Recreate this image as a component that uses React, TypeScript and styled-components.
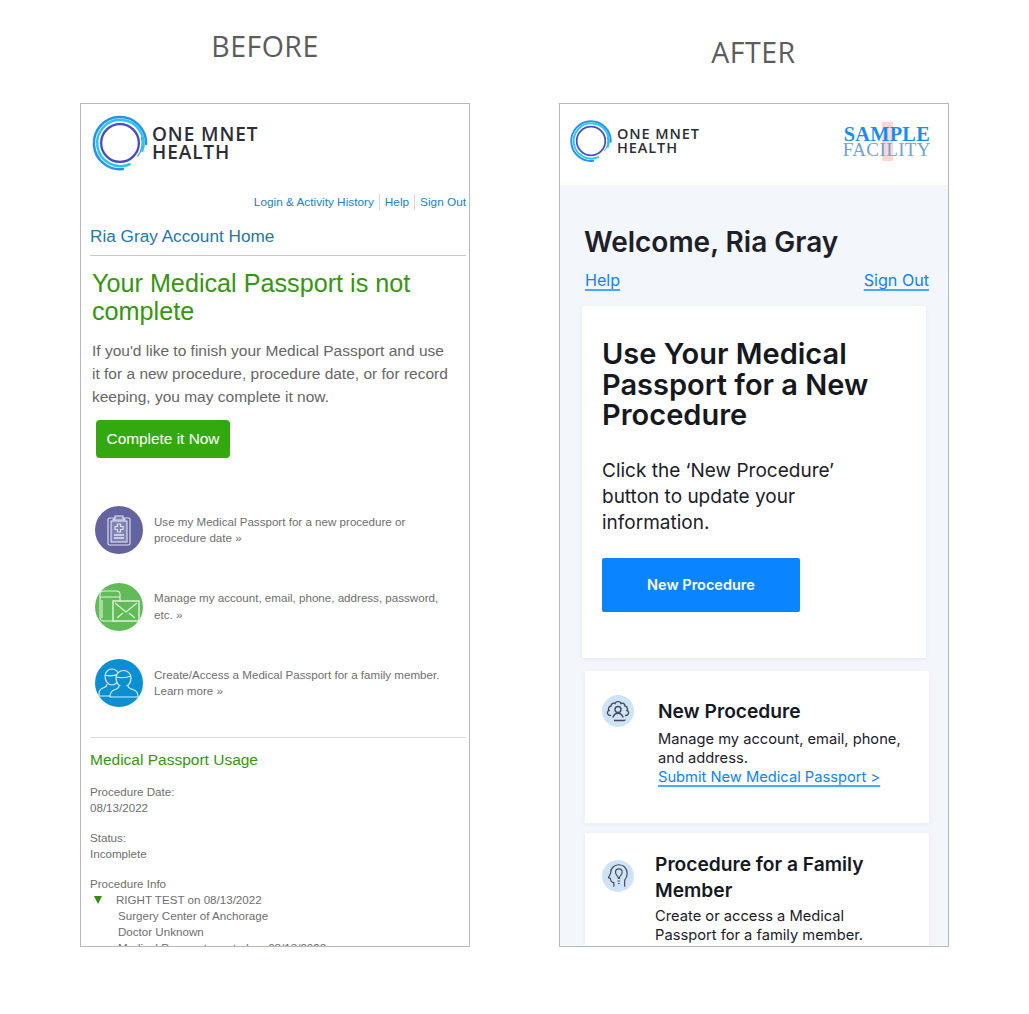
import styled, { createGlobalStyle } from "styled-components";

const GlobalStyle = createGlobalStyle`
  * { box-sizing: border-box; }
  html, body { margin: 0; padding: 0; background: #fff; }
`;

const Page = styled.div`
  display: flex;
  width: 1029px;
  height: 1014px;
  padding-left: 80px;
  gap: 89px;
  overflow: hidden;
`;

const Column = styled.div`
  width: 390px;
  display: flex;
  flex-direction: column;
`;

const Caption = styled.div<{ $top: number; $shift: number }>`
  height: 103px;
  padding-top: ${(p) => p.$top}px;
  margin-left: ${(p) => p.$shift}px;
  text-align: center;
  font-family: "Open Sans", "Liberation Sans", sans-serif;
  font-size: 28.5px;
  line-height: 36px;
  letter-spacing: 0.5px;
  color: #5c5c5c;
`;

const Frame = styled.div`
  height: 844px;
  border: 1px solid #b8b8b8;
  overflow: hidden;
  background: #fff;
`;

/* old site */
const Old = styled.div`
  font-family: "Liberation Sans", Arial, sans-serif;
  color: #6a6a6a;
  padding: 9px 3px 0 9px;
`;

const OldLogoRow = styled.div`
  display: flex;
  align-items: center;
  gap: 3px;
  margin-left: 1px;
  height: 60px;
`;

const LogoText = styled.div<{ $size: number; $line: number }>`
  font-family: "Open Sans", "Liberation Sans", sans-serif;
  font-weight: 600;
  font-size: ${(p) => p.$size}px;
  line-height: ${(p) => p.$line}px;
  letter-spacing: 0.9px;
  color: #2b2e36;
`;

const OldLinks = styled.div`
  display: flex;
  justify-content: flex-end;
  margin-top: 21px;
  font-size: 11.8px;
  line-height: 16px;
  color: #1a7fc1;
`;

const OldLink = styled.span`
  padding: 0 5px;
  border-left: 1px solid #d6d6e0;
  &:first-child { border-left: 0; }
  &:last-child { padding-right: 0; }
`;

const OldAccount = styled.div`
  margin-top: 16px;
  padding-bottom: 8px;
  border-bottom: 1px solid #c9c9c9;
  font-size: 17.2px;
  line-height: 21px;
  color: #2277aa;
`;

const OldHeading = styled.h1`
  margin: 13px 0 0 2px;
  font-weight: 400;
  font-size: 25.2px;
  line-height: 28px;
  color: #35950f;
`;

const OldPara = styled.p`
  margin: 14px 0 0 2px;
  font-size: 15.5px;
  line-height: 23px;
  color: #666;
`;

const OldButton = styled.div`
  width: 134px;
  height: 38px;
  margin: 12px 0 0 6px;
  border-radius: 4px;
  background: #34a80f;
  color: #fff;
  font-size: 15.4px;
  line-height: 38px;
  text-align: center;
`;

const OldList = styled.div`
  display: flex;
  flex-direction: column;
  gap: 28.5px;
  margin: 48px 0 0 5px;
`;

const OldRow = styled.div`
  display: flex;
  align-items: center;
  gap: 11px;
  height: 48px;
`;

const OldCircle = styled.div<{ $bg: string }>`
  flex: none;
  width: 48px;
  height: 48px;
  border-radius: 50%;
  background: ${(p) => p.$bg};
  display: flex;
  align-items: center;
  justify-content: center;
`;

const OldRowText = styled.div`
  font-size: 11.6px;
  line-height: 16.5px;
  color: #6e6e6e;
`;

const OldUsage = styled.div`
  margin-top: 30px;
  border-top: 1px solid #dcdcdc;
  padding-top: 12px;
  font-size: 15.5px;
  line-height: 20px;
  color: #35950f;
`;

const OldBlock = styled.div`
  margin-top: 14px;
  font-size: 11.6px;
  line-height: 16px;
  color: #6e6e6e;
`;

const ProcedureRow = styled.div`
  display: flex;
  align-items: center;
  padding-left: 4px;
  gap: 14px;
`;

const Triangle = styled.span`
  width: 0;
  height: 0;
  border-left: 4.5px solid transparent;
  border-right: 4.5px solid transparent;
  border-top: 8px solid #2f8f10;
`;

const Indented = styled.div`
  padding-left: 28px;
`;

/* new site */
const NewHeader = styled.div`
  height: 81px;
  display: flex;
  align-items: flex-start;
  justify-content: space-between;
  padding: 15px 17px 0 9px;
  background: #fff;
`;

const NewLogoRow = styled.div`
  display: flex;
  align-items: center;
  gap: 4px;
`;

const Facility = styled.div`
  position: relative;
  margin-top: 6px;
  font-family: "Liberation Serif", serif;
  text-align: center;
  color: #1a8cf0;
`;

const FacilityMark = styled.span`
  position: absolute;
  left: 39px;
  top: -3px;
  width: 11px;
  height: 39px;
  background: #f8d9d8;
`;

const FacilityTop = styled.div`
  position: relative;
  font-weight: 700;
  font-size: 20.3px;
  line-height: 19px;
  letter-spacing: 0.3px;
`;

const FacilityBottom = styled.div`
  position: relative;
  margin-top: -3px;
  font-size: 19px;
  line-height: 17px;
  letter-spacing: 0.4px;
  color: #6fa3d8;
`;

const NewBody = styled.div`
  height: 762px;
  padding: 39px 19px 0 22px;
  background: #f3f6fb;
  font-family: Inter, "Liberation Sans", sans-serif;
  color: #1d2029;
`;

const Welcome = styled.h1`
  margin: 0 0 0 2px;
  font-weight: 600;
  font-size: 28px;
  line-height: 36px;
`;

const LinkRow = styled.div`
  display: flex;
  justify-content: space-between;
  margin: 9px 0 0 3px;
  font-size: 16.1px;
  line-height: 22px;
`;

const BlueLink = styled.span`
  color: #0a84ff;
  text-decoration: underline;
  text-decoration-color: #4ea6ff;
  text-underline-offset: 3px;
  text-decoration-thickness: 1.5px;
`;

const HeroCard = styled.div`
  width: 344px;
  height: 352px;
  margin-top: 15px;
  padding: 33px 20px 0;
  background: #fff;
  box-shadow: 0 1px 4px rgba(60, 80, 120, 0.08);
`;

const HeroTitle = styled.h2`
  margin: 0;
  font-weight: 600;
  font-size: 29px;
  line-height: 30.5px;
  color: #16181f;
`;

const HeroText = styled.p`
  max-width: 245px;
  margin: 27px 0 0;
  font-size: 19px;
  line-height: 26px;
`;

const HeroButton = styled.div`
  width: 198px;
  height: 54px;
  margin-top: 22px;
  border-radius: 2px;
  background: #0a84ff;
  color: #fff;
  font-weight: 600;
  font-size: 14.5px;
  line-height: 54px;
  text-align: center;
`;

const InfoCard = styled.div<{ $height: number; $gap: number; $top: number; $padTop: number }>`
  width: 344px;
  height: ${(p) => p.$height}px;
  margin: ${(p) => p.$top}px 0 0 3px;
  padding: ${(p) => p.$padTop}px 12px 0 17px;
  display: flex;
  gap: ${(p) => p.$gap}px;
  background: #fff;
  box-shadow: 0 1px 4px rgba(60, 80, 120, 0.08);
`;

const IconDisc = styled.div<{ $offset: number }>`
  flex: none;
  width: 32px;
  height: 32px;
  margin-top: ${(p) => p.$offset}px;
  border-radius: 50%;
  background: #cfe3f7;
  display: flex;
  align-items: center;
  justify-content: center;
`;

const InfoTitle = styled.div`
  font-weight: 600;
  font-size: 19.2px;
  line-height: 26px;
  color: #16181f;
`;

const InfoText = styled.div<{ $top: number }>`
  margin-top: ${(p) => p.$top}px;
  font-size: 14.7px;
  line-height: 19px;
`;

function RingLogo({ size }: { size: number }) {
  return (
    <svg width={size} height={size} viewBox="0 0 60 60" fill="none">
      <path d="M57 31A27 27 0 1 0 33 57" stroke="#2a8ff2" strokeWidth="2.6" strokeLinecap="round" />
      <path d="M53 38A24 24 0 1 0 40 52" stroke="#25c9ef" strokeWidth="2.6" strokeLinecap="round" />
      <path d="M52 24A22.5 22.5 0 0 1 48 44" stroke="#3aa0f0" strokeWidth="1.2" />
      <circle cx="30" cy="30" r="19.5" stroke="#4b4ac6" strokeWidth="2.4" />
    </svg>
  );
}

function ClipboardIcon() {
  return (
    <svg width="26" height="32" viewBox="0 0 26 32" fill="none" stroke="#e4e4f2" strokeWidth="1.1">
      <rect x="2" y="4" width="22" height="27" rx="1.5" />
      <rect x="5" y="7" width="16" height="21" fill="#8384b6" />
      <path d="M9 4V2h8v2l2 2H7z" fill="#8384b6" />
      <path d="M11.500 10h3v2.500H17v3h-2.500V18h-3v-2.500H9v-3h2.500z" />
      <path d="M8 21h10M8 24h10" strokeWidth="1.6" />
    </svg>
  );
}

function DevicesIcon() {
  return (
    <svg width="42" height="34" viewBox="0 0 42 34" fill="none" stroke="#e4f5df" strokeWidth="1.1">
      <rect x="2" y="1" width="20" height="30" rx="3.500" />
      <path d="M2 7h20M4 10v18" />
      <rect x="15" y="11" width="26" height="20" fill="#62bb58" strokeWidth="1.4" />
      <path d="M17 13l11 9 11-9M19 28l6-5M37 28l-6-5" />
    </svg>
  );
}

function PeopleIcon() {
  return (
    <svg width="42" height="34" viewBox="0 0 42 34" fill="none" stroke="#d8eefa" strokeWidth="1.2">
      <path d="M7 10a7 7 0 0 1 14 0c0 5-3 9-7 9s-7-4-7-9zM7 9c3 1 9 1 14-1" />
      <path d="M9 18c0 2-1 3-4 4-3 1-4 3-4 6v2h13" />
      <path d="M18 12a7.500 7.500 0 0 1 15 0c0 5-3 9-7.500 9S18 17 18 12zM18 11c4 1 10 1 15-1" fill="#0a8fd3" />
      <path d="M21 20c0 2-2 3-5 4-3 1-4 3-4 7h28c0-4-1-6-4-7-3-1-6-2-6-4" fill="#0a8fd3" />
    </svg>
  );
}

function GearPersonIcon() {
  return (
    <svg width="24" height="24" viewBox="0 0 24 24" fill="none" stroke="#454a57" strokeWidth="1.4">
      <circle cx="12" cy="10.500" r="3" />
      <path d="M8 21.500h10c1 0 1-.5 1-1M6.800 18.500c1-3 2.700-4.300 5.200-4.300s4.200 1.300 5.200 4.300" />
      <path d="M5 16.500c-2.500 0-4-1.700-3.500-3.500.2-.8.800-1.300 1.500-1.500-1-1.500-.5-4 2-4.500 0-2 2-3.500 4-2.500.8-2.500 5.200-2.500 6 0 2-1 4 .5 4 2.500 2.500.5 3 3 2 4.500.7.200 1.300.7 1.500 1.500.5 1.800-1 3.500-3.500 3.500" />
    </svg>
  );
}

function HeadBulbIcon() {
  return (
    <svg width="20" height="26" viewBox="0 0 24 30" fill="none" stroke="#454a57" strokeWidth="1.4">
      <path d="M7 28v-5c-3-.5-4-1.500-4-5l-2.500-1 2.500-5C3 6 7 1.500 13 1.500S23 6 23 12c0 4-1.500 6.500-3 8v8" />
      <path d="M12.500 18c0-3-3.500-4-3.500-7.500a4 4 0 0 1 8 0c0 3.500-3.500 4.500-3.500 7.500zM11.500 21h3M12 24h2" />
    </svg>
  );
}

export default function App() {
  return (
    <>
      <GlobalStyle />
      <Page>
        <Column>
          <Caption $top={28} $shift={-20}>BEFORE</Caption>
          <Frame>
            <Old>
              <OldLogoRow>
                <RingLogo size={58} />
                <LogoText $size={19} $line={18}>
                  ONE MNET
                  <br />
                  HEALTH
                </LogoText>
              </OldLogoRow>
              <OldLinks>
                <OldLink>Login &amp; Activity History</OldLink>
                <OldLink>Help</OldLink>
                <OldLink>Sign Out</OldLink>
              </OldLinks>
              <OldAccount>Ria Gray Account Home</OldAccount>
              <OldHeading>Your Medical Passport is not complete</OldHeading>
              <OldPara>
                If you'd like to finish your Medical Passport and use
                <br />
                it for a new procedure, procedure date, or for record
                <br />
                keeping, you may complete it now.
              </OldPara>
              <OldButton>Complete it Now</OldButton>
              <OldList>
                <OldRow>
                  <OldCircle $bg="#62639f">
                    <ClipboardIcon />
                  </OldCircle>
                  <OldRowText>
                    Use my Medical Passport for a new procedure or
                    <br />
                    procedure date »
                  </OldRowText>
                </OldRow>
                <OldRow>
                  <OldCircle $bg="#62bb58">
                    <DevicesIcon />
                  </OldCircle>
                  <OldRowText>
                    Manage my account, email, phone, address, password,
                    <br />
                    etc. »
                  </OldRowText>
                </OldRow>
                <OldRow>
                  <OldCircle $bg="#0a8fd3">
                    <PeopleIcon />
                  </OldCircle>
                  <OldRowText>
                    Create/Access a Medical Passport for a family member.
                    <br />
                    Learn more »
                  </OldRowText>
                </OldRow>
              </OldList>
              <OldUsage>Medical Passport Usage</OldUsage>
              <OldBlock>
                Procedure Date:
                <br />
                08/13/2022
              </OldBlock>
              <OldBlock>
                Status:
                <br />
                Incomplete
              </OldBlock>
              <OldBlock>
                Procedure Info
                <ProcedureRow>
                  <Triangle />
                  RIGHT TEST on 08/13/2022
                </ProcedureRow>
                <Indented>
                  Surgery Center of Anchorage
                  <br />
                  Doctor Unknown
                  <br />
                  Medical Passport created on 08/13/2022
                </Indented>
              </OldBlock>
            </Old>
          </Frame>
        </Column>
        <Column>
          <Caption $top={34} $shift={-1}>AFTER</Caption>
          <Frame>
            <NewHeader>
              <NewLogoRow>
                <RingLogo size={44} />
                <LogoText $size={14.5} $line={14}>
                  ONE MNET
                  <br />
                  HEALTH
                </LogoText>
              </NewLogoRow>
              <Facility>
                <FacilityMark />
                <FacilityTop>SAMPLE</FacilityTop>
                <FacilityBottom>FACILITY</FacilityBottom>
              </Facility>
            </NewHeader>
            <NewBody>
              <Welcome>Welcome, Ria Gray</Welcome>
              <LinkRow>
                <BlueLink>Help</BlueLink>
                <BlueLink>Sign Out</BlueLink>
              </LinkRow>
              <HeroCard>
                <HeroTitle>Use Your Medical Passport for a New Procedure</HeroTitle>
                <HeroText>Click the ‘New Procedure’ button to update your information.</HeroText>
                <HeroButton>New Procedure</HeroButton>
              </HeroCard>
              <InfoCard $height={152} $gap={24} $top={13} $padTop={27}>
                <IconDisc $offset={-3}>
                  <GearPersonIcon />
                </IconDisc>
                <div>
                  <InfoTitle>New Procedure</InfoTitle>
                  <InfoText $top={6}>
                    Manage my account, email, phone, and address.
                    <br />
                    <BlueLink>Submit New Medical Passport &gt;</BlueLink>
                  </InfoText>
                </div>
              </InfoCard>
              <InfoCard $height={140} $gap={21} $top={10} $padTop={18}>
                <IconDisc $offset={9}>
                  <HeadBulbIcon />
                </IconDisc>
                <div>
                  <InfoTitle>Procedure for a Family Member</InfoTitle>
                  <InfoText $top={4}>
                    Create or access a Medical
                    <br />
                    Passport for a family member.
                  </InfoText>
                </div>
              </InfoCard>
            </NewBody>
          </Frame>
        </Column>
      </Page>
    </>
  );
}
